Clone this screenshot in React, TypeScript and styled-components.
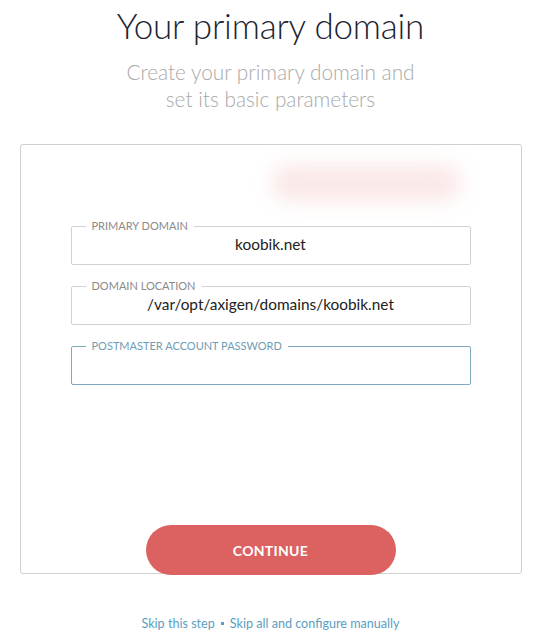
import React from "react"
import styled, { createGlobalStyle } from "styled-components"

const GlobalStyle = createGlobalStyle`
  html, body {
    margin: 0;
    padding: 0;
    background: #ffffff;
  }
  body {
    font-family: Lato, "Open Sans", "Liberation Sans", sans-serif;
  }
`

const Page = styled.main`
  display: flex;
  flex-direction: column;
  align-items: center;
  width: 541px;
  min-height: 642px;
  padding-top: 3px;
  box-sizing: border-box;
`

const Title = styled.h1`
  margin: 0;
  font-size: 35px;
  line-height: 44px;
  font-weight: 300;
  letter-spacing: -0.2px;
  color: #1a2430;
`

const Subtitle = styled.p`
  margin: 11px 0 0;
  font-size: 20.8px;
  line-height: 27px;
  font-weight: 300;
  color: #a9a9a9;
  text-align: center;
`

const Card = styled.section`
  position: relative;
  display: flex;
  flex-direction: column;
  align-items: center;
  width: 502px;
  height: 430px;
  margin-top: 32px;
  padding-top: 75px;
  box-sizing: border-box;
  border: 1px solid #cfcfcf;
  border-radius: 3px;
  background: #fff;
`

const Glow = styled.div`
  position: absolute;
  top: 20px;
  left: 250px;
  width: 190px;
  height: 36px;
  border-radius: 20px;
  background: #f9e2e1;
  filter: blur(10px);
  opacity: 0.8;
`

const Fields = styled.div`
  display: flex;
  flex-direction: column;
  gap: 15px;
  width: 400px;
`

const Fieldset = styled.fieldset<{ $active?: boolean }>`
  margin: 0;
  padding: 0 14px;
  min-width: 0;
  height: 45px;
  box-sizing: border-box;
  border: 1px solid ${(p) => (p.$active ? "#7fa9bf" : "#d2d2d2")};
  border-radius: 2px;
`

const Legend = styled.legend<{ $active?: boolean }>`
  padding: 0 6px;
  font-size: 11px;
  line-height: 12px;
  text-transform: uppercase;
  color: ${(p) => (p.$active ? "#6f9db5" : "#8a8a8a")};
`

const Input = styled.input`
  display: block;
  width: 100%;
  height: 24px;
  margin: 0;
  padding: 0;
  border: 0;
  outline: none;
  background: transparent;
  font-family: inherit;
  font-size: 15.4px;
  color: #222;
  text-align: center;
`

const Button = styled.button`
  position: relative;
  width: 250px;
  height: 50px;
  margin-top: auto;
  margin-bottom: -2px;
  border: 0;
  border-radius: 25px;
  background: #dc6262;
  color: #fff;
  font-family: inherit;
  font-size: 14px;
  font-weight: 700;
  letter-spacing: 0.3px;
  cursor: pointer;
`

const Links = styled.nav`
  display: flex;
  align-items: center;
  gap: 6px;
  margin-top: 42px;
  font-size: 12.6px;
  color: #5c9ec0;
`

const Link = styled.a`
  color: inherit;
  text-decoration: none;
`

const Dot = styled.span`
  width: 3px;
  height: 3px;
  background: #5c9ec0;
`

interface FieldProps {
  label: string
  value?: string
  type?: string
  active?: boolean
}

const Field = ({ label, value = "", type = "text", active }: FieldProps) => (
  <Fieldset $active={active}>
    <Legend $active={active}>{label}</Legend>
    <Input type={type} defaultValue={value} />
  </Fieldset>
)

const App = () => (
  <>
    <GlobalStyle />
    <Page>
      <Title>Your primary domain</Title>
      <Subtitle>
        Create your primary domain and
        <br />
        set its basic parameters
      </Subtitle>
      <Card>
        <Glow />
        <Fields>
          <Field label="Primary domain" value="koobik.net" />
          <Field label="Domain location" value="/var/opt/axigen/domains/koobik.net" />
          <Field label="Postmaster account password" type="password" active />
        </Fields>
        <Button>CONTINUE</Button>
      </Card>
      <Links>
        <Link href="#">Skip this step</Link>
        <Dot />
        <Link href="#">Skip all and configure manually</Link>
      </Links>
    </Page>
  </>
)

export default App
